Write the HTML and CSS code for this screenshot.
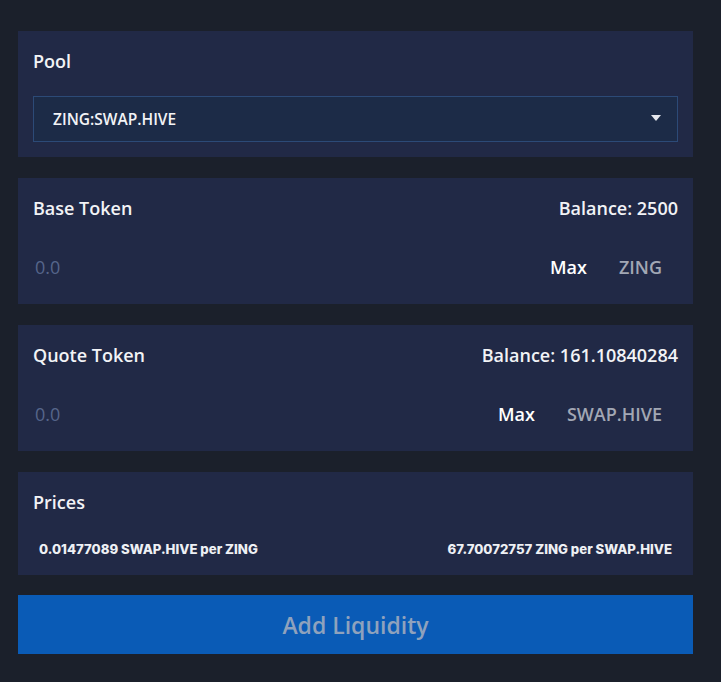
FILE: index.html
```html
<!DOCTYPE html>
<html lang="en">
<head>
    <meta charset="UTF-8">
    <meta name="viewport" content="width=device-width, initial-scale=1.0">
    <title>Add Liquidity</title>
    <link rel="stylesheet" href="styles.css">
</head>
<body>
    <div class="liquidity">
        <div class="card">
            <div class="card-title">Pool</div>
            <div class="pool-select">
                <span>ZING:SWAP.HIVE</span>
                <svg class="caret" width="10" height="6" viewBox="0 0 10 6"><path d="M0 0h10L5 6z" fill="#e6e8ee"/></svg>
            </div>
        </div>

        <div class="card">
            <div class="row">
                <span class="card-title">Base Token</span>
                <span class="balance">Balance: 2500</span>
            </div>
            <div class="row amount-row">
                <span class="amount">0.0</span>
                <span class="max">Max</span>
                <span class="symbol">ZING</span>
            </div>
        </div>

        <div class="card">
            <div class="row">
                <span class="card-title">Quote Token</span>
                <span class="balance">Balance: 161.10840284</span>
            </div>
            <div class="row amount-row">
                <span class="amount">0.0</span>
                <span class="max">Max</span>
                <span class="symbol">SWAP.HIVE</span>
            </div>
        </div>

        <div class="card prices">
            <div class="card-title">Prices</div>
            <div class="row price-row">
                <span>0.01477089 SWAP.HIVE per ZING</span>
                <span>67.70072757 ZING per SWAP.HIVE</span>
            </div>
        </div>

        <button class="add-btn" disabled>Add Liquidity</button>
    </div>
</body>
</html>
```

FILE: styles.css
```css
body {
    margin: 0;
    padding: 0;
    background: #1b202b;
    font-family: 'Open Sans', 'Noto Sans', sans-serif;
    color: #f2f3f6;
}
.liquidity {
    padding: 31px 28px 28px 18px;
    display: flex;
    flex-direction: column;
    gap: 21px;
}
.card {
    background: #212946;
    padding: 14px 15px 15px 15px;
}
.card-title {
    font-size: 18px;
    font-weight: 600;
    line-height: 32px;
    color: #f2f3f6;
}
.pool-select {
    margin-top: 19px;
    height: 44px;
    border: 1px solid #2c4a77;
    background: #1c2b47;
    display: flex;
    align-items: center;
    justify-content: space-between;
    padding: 0 16px 0 19px;
    font-size: 15.5px;
    font-weight: 600;
}
.caret {
    margin-top: -2px;
}
.row {
    display: flex;
    align-items: center;
    justify-content: space-between;
}
.balance {
    font-size: 18px;
    font-weight: 600;
}
.amount-row {
    margin-top: 31px;
    line-height: 24px;
    justify-content: flex-end;
}
.card:has(.amount-row) {
    padding-bottom: 25px;
}
.amount {
    margin-right: auto;
    margin-left: 2px;
    font-size: 18px;
    color: #56658a;
}
.max {
    font-size: 18px;
    font-weight: 600;
    color: #fff;
    margin-right: 32px;
}
.symbol {
    font-size: 18px;
    font-weight: 600;
    color: #a2a7b4;
    margin-right: 16px;
}
.prices {
    padding-bottom: 18px;
}
.price-row {
    margin-top: 23px;
    line-height: 16px;
    padding: 0 6px;
    font-family: 'Inter', sans-serif;
    font-weight: 800;
    font-size: 13.2px;
    color: #eef0f4;
}
.add-btn {
    margin-top: -1px;
    height: 59px;
    border: none;
    background: #0a5bb6;
    color: #8fa2bd;
    font-family: 'Open Sans', sans-serif;
    font-size: 23px;
    font-weight: 600;
}
```
